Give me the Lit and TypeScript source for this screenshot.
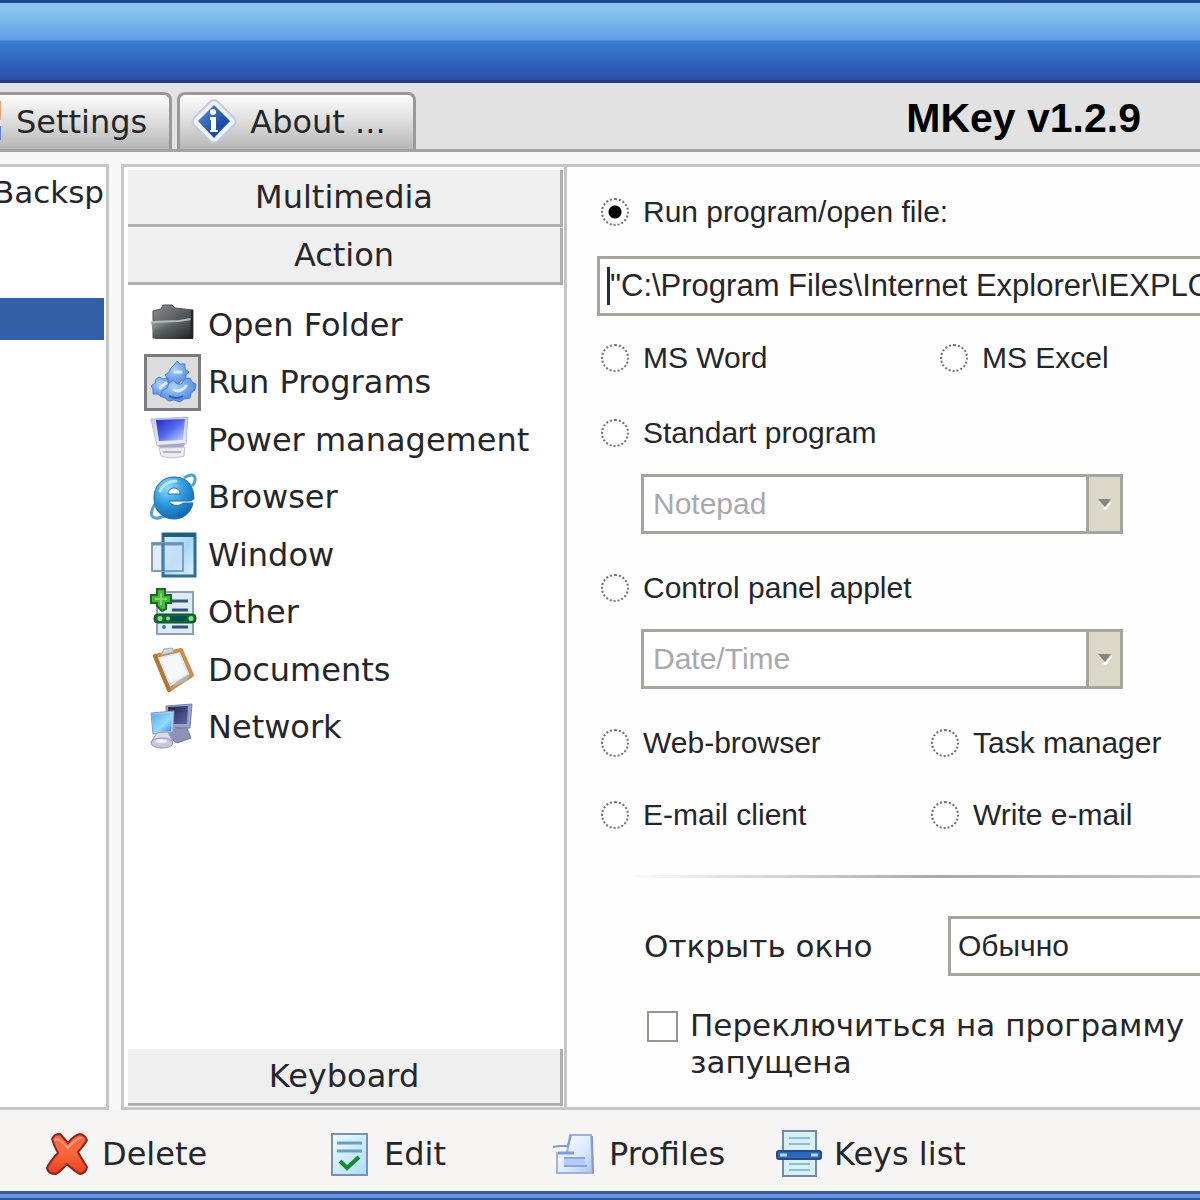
import { LitElement, html, svg, css, type TemplateResult } from "lit";
import { customElement, state } from "lit/decorators.js";
import { classMap } from "lit/directives/class-map.js";

const icon = (body: TemplateResult) =>
  html`<svg class="icon" viewBox="0 0 48 48" aria-hidden="true">${body}</svg>`;

const folderIcon = icon(svg`
  <defs>
    <linearGradient id="fo1" x1="0" y1="0" x2="1" y2="1"><stop offset="0" stop-color="#8b9292"/><stop offset="1" stop-color="#222627"/></linearGradient>
    <linearGradient id="fo2" x1="0" y1="0" x2="1" y2="1"><stop offset="0" stop-color="#aab2b2"/><stop offset=".4" stop-color="#5d6465"/><stop offset="1" stop-color="#1f2223"/></linearGradient>
  </defs>
  <path d="M4 10 L12 8 L14 4 H23 L26 7 L44 9 V37 H4 Z" fill="url(#fo1)" stroke="#4d5252"/>
  <path d="M2 21 L30 20 L42 18 V38 H6 Z" fill="url(#fo2)"/>
  <path d="M2 21 L30 20 L42 18" fill="none" stroke="#b6bcbc" stroke-width="2"/>
  <path d="M42 9 H44 V38 H41 Z" fill="#232728"/>`);

const runIcon = icon(svg`
  <defs><radialGradient id="ru1" cx=".4" cy=".35" r=".7"><stop offset="0" stop-color="#a9d2f9"/><stop offset="1" stop-color="#4a83dc"/></radialGradient></defs>
  <g fill="url(#ru1)" stroke="#4d80cf" stroke-width="1">
    <path d="M22 10 l3 -3 l3 -4 l3 3 l5 0 l0 5 l4 3 l-3 3 l0 5 l-5 1 l-3 4 l-5 -2 l-5 1 l0 -5 l-3 -4 l4 -3 z"/>
    <path d="M10 19 l4 2 l4 -1 l1 4 l4 3 l-2 4 l0 4 l-5 1 l-3 3 l-4 -3 l-5 0 l0 -5 l-2 -3 l4 -3 l1 -4 z"/>
    <path d="M24 22 l4 4 h4 l4 -5 l5 -1 l2 4 l4 2 l-1 6 l-4 3 l-1 5 l-6 1 l-4 3 l-6 -2 l-5 1 l-4 -3 l-5 -2 l2 -5 l5 -3 l2 -5 z"/>
  </g>
  <path d="M26 14 h6 M11 30 l6 -5 M25 32 q6 3 12 -4" stroke="#d9ecff" stroke-width="3" fill="none" stroke-linecap="round"/>
  <path d="M20 38 q8 4 14 0" stroke="#2c61c4" stroke-width="2" fill="none"/>`);

const powerIcon = icon(svg`
  <defs>
    <linearGradient id="po1" x1="0" y1="0" x2="1" y2="1"><stop offset="0" stop-color="#2226c8"/><stop offset=".5" stop-color="#5368ee"/><stop offset="1" stop-color="#c9dcff"/></linearGradient>
    <linearGradient id="po2" x1="0" y1="0" x2="0" y2="1"><stop offset="0" stop-color="#c7c6e8"/><stop offset="1" stop-color="#f1f0f6"/></linearGradient>
  </defs>
  <path d="M2 3 L39 1 L37 28 L8 30 Z" fill="url(#po2)" stroke="#b9b9dd"/>
  <path d="M7 4 L36 3 L34 24 L10 25 Z" fill="url(#po1)"/>
  <path d="M9 29 L36 27 L34 33 H12 Z" fill="#a7a7c4"/>
  <path d="M10 32 L36 31 L35 40 Q23 44 12 40 Z" fill="#ebeaf1" stroke="#c3c1d4"/>
  <path d="M14 36 H32" stroke="#b4b2c8" stroke-width="2"/>`);

const browserIcon = icon(svg`
  <defs><radialGradient id="br1" cx=".35" cy=".25" r=".85"><stop offset="0" stop-color="#8fdcfb"/><stop offset=".5" stop-color="#2b98dc"/><stop offset="1" stop-color="#0c5ba6"/></radialGradient></defs>
  <path d="M35 5 Q45 -1 46 5 Q47 9 43 13 M6 31 Q0 41 4 44 Q9 47 17 42" fill="none" stroke="#5a9fc9" stroke-width="3"/>
  <path fill-rule="evenodd" d="M25 4 C38 4 45 12 45 26 L41 28 H20 C22 33 30 34 34 30 H44 C42 40 34 46 25 46 C13 46 5 37 5 25 C5 13 13 4 25 4 Z M19 21 H31 C31 13 19 13 19 21 Z" fill="url(#br1)" stroke="#1a6fb4"/>
  <path d="M11 18 Q16 8 27 8" fill="none" stroke="#b4e6fc" stroke-width="3" stroke-linecap="round"/>`);

const windowIcon = icon(svg`
  <defs><linearGradient id="wi1" x1="0" y1="0" x2="1" y2="1"><stop offset="0" stop-color="#d4effc"/><stop offset=".5" stop-color="#a5d8f8"/><stop offset="1" stop-color="#dff4fe"/></linearGradient></defs>
  <rect x="14" y="3" width="32" height="42" fill="url(#wi1)" stroke="#2f6e92" stroke-width="3"/>
  <path d="M14 4 H46" stroke="#245b7c" stroke-width="4"/>
  <rect x="3" y="12" width="31" height="28" fill="#cfe2f7" fill-opacity=".65" stroke="#7f9fc0" stroke-width="2"/>
  <path d="M3 13 H34" stroke="#6b95b8" stroke-width="3"/>
  <path d="M14 12 V40" stroke="#3f7fae" stroke-width="3"/>`);

const otherIcon = icon(svg`
  <rect x="8" y="4" width="36" height="42" fill="#dfeaf5" stroke="#8d9db6" stroke-width="2"/>
  <path d="M23 13 H39 M23 22 H39 M23 39 H39" stroke="#31567a" stroke-width="3"/>
  <circle cx="15" cy="39" r="2" fill="#2f8c8c"/>
  <path d="M10 21 h6" stroke="#a6b8ca" stroke-width="2"/>
  <rect x="5" y="26" width="42" height="9" rx="4" fill="#14653a" stroke="#0f5226"/>
  <rect x="20" y="28" width="18" height="5" fill="#07504c"/>
  <circle cx="11" cy="30.500" r="2.500" fill="#8ee07c"/><circle cx="19" cy="30.500" r="2" fill="#8ee07c"/><circle cx="42" cy="30.500" r="2.500" fill="#8ee07c"/>
  <path d="M8 1 H16 V7 H22 V15 H17 V21 L13 23 L8 18 V15 H2 V7 H8 Z" fill="#45b83b" stroke="#1a6a1f" stroke-width="2"/>
  <path d="M12 5 V17 M6 11 H18" stroke="#7fd86e" stroke-width="2"/>`);

const documentsIcon = icon(svg`
  <defs><linearGradient id="do1" x1="0" y1="0" x2="1" y2="1"><stop offset="0" stop-color="#ffffff"/><stop offset="1" stop-color="#d8dfea"/></linearGradient></defs>
  <path d="M6 10 L32 4 L43 29 L20 44 Z" fill="url(#do1)" stroke="#c98d4c" stroke-width="4" stroke-linejoin="round"/>
  <path d="M6 10 L20 44" stroke="#b3763a" stroke-width="4" stroke-linecap="round"/>
  <path d="M11 12 L30 7 L39 28 L21 38 Z" fill="#f4f7fb" stroke="#dde3ec"/>
  <path d="M12 9 L15 3 L23 2 L25 6 Z" fill="#cfd4dc" stroke="#a2a8b2"/>
  <path d="M27 36 L41 28 L37 35 L24 41 Z" fill="#b9b3ac"/>`);

const networkIcon = icon(svg`
  <defs>
    <linearGradient id="ne1" x1="0" y1="0" x2="1" y2="1"><stop offset="0" stop-color="#59a9ec"/><stop offset=".6" stop-color="#8fdcfb"/><stop offset="1" stop-color="#3b85d4"/></linearGradient>
    <linearGradient id="ne2" x1="0" y1="0" x2="1" y2="1"><stop offset="0" stop-color="#20244e"/><stop offset="1" stop-color="#5a66a8"/></linearGradient>
  </defs>
  <path d="M17 3 L43 1 L41 25 L18 24 Z" fill="#9fa2c4" stroke="#7c80a8"/>
  <path d="M19 4 L39 3 L38 21 L20 21 Z" fill="url(#ne2)"/>
  <path d="M22 26 L38 25 L42 35 L28 40 L20 34 Z" fill="#8f92b6" stroke="#777ba6"/>
  <path d="M2 10 L25 8 L24 29 L4 31 Z" fill="#b9cdea" stroke="#7c9bcb"/>
  <path d="M3 11 L23 10 L22 28 L4 29 Z" fill="url(#ne1)"/>
  <path d="M8 30 L19 29 L24 39 L12 45 L2 39 Z" fill="#d9dbe8" stroke="#9a9eb8"/>
  <ellipse cx="13" cy="40" rx="11" ry="5" fill="#c5c8da" stroke="#8f93b1"/>
  <ellipse cx="12" cy="38" rx="6" ry="2" fill="#f1f2f8"/>`);

const infoIcon = icon(svg`
  <defs><linearGradient id="in1" x1="0" y1="0" x2="1" y2="1"><stop offset="0" stop-color="#5d93dc"/><stop offset=".6" stop-color="#1f53a8"/><stop offset="1" stop-color="#173f86"/></linearGradient></defs>
  <path d="M24 2 Q26 2 28 4 L44 20 Q47 24 44 27 L28 43 Q24 46 20 43 L4 27 Q1 24 4 20 L20 4 Q22 2 24 2 Z" fill="#eef2fb" stroke="#c0cbe3" stroke-width="2"/>
  <path d="M24 7 L40 23 L24 40 L8 23 Z" fill="url(#in1)"/>
  <circle cx="23" cy="14" r="3" fill="#fff"/>
  <path d="M20 19 H26 V32 H28 V34 H20 V32 H21 V22 H20 Z" fill="#fff"/>`);

const settingsIcon = icon(svg`
  <rect x="2" y="3" width="45" height="19" fill="#f3a06a"/><rect x="2" y="22" width="45" height="6" fill="#f4e3dc"/><rect x="2" y="28" width="45" height="14" fill="#5f83cf"/>`);

const deleteIcon = icon(svg`
  <defs><linearGradient id="de1" x1="0" y1="0" x2="0" y2="1"><stop offset="0" stop-color="#f4684a"/><stop offset=".5" stop-color="#f8663a"/><stop offset="1" stop-color="#e8401f"/></linearGradient></defs>
  <path d="M9 9 Q11 4 17 4 Q21 8 25 13 Q30 6 37 4 Q42 5 44 10 Q42 14 35 22 Q38 28 44 37 Q43 43 37 44 Q31 41 24 34 Q18 41 13 44 Q5 44 4 38 Q7 31 15 23 Q11 16 9 9 Z" fill="url(#de1)" stroke="#8e2318" stroke-width="2" stroke-linejoin="round"/>
  <path d="M12 10 Q15 7 25 18 Q32 9 38 8" fill="none" stroke="#fb9a80" stroke-width="2" stroke-linecap="round"/>`);

const editIcon = icon(svg`
  <defs><linearGradient id="ed1" x1="0" y1="0" x2="1" y2="1"><stop offset="0" stop-color="#eefaff"/><stop offset="1" stop-color="#a9dff6"/></linearGradient></defs>
  <rect x="7" y="4" width="35" height="41" fill="url(#ed1)" stroke="#7c8fad" stroke-width="2"/>
  <path d="M12 13 H37 M12 21 H37" stroke="#6ba0bd" stroke-width="3"/>
  <path d="M15 31 L22 38 L34 27" fill="none" stroke="#168a2c" stroke-width="4"/>`);

const profilesIcon = icon(svg`
  <defs><linearGradient id="pr1" x1="0" y1="0" x2="1" y2="1"><stop offset="0" stop-color="#ffffff"/><stop offset=".6" stop-color="#dbe8fb"/><stop offset="1" stop-color="#a9c3ee"/></linearGradient></defs>
  <path d="M20 5 H41 L43 43 H7 V23 H17 Z" fill="url(#pr1)" stroke="#a3b3d6" stroke-width="2"/>
  <path d="M3 17 Q8 16 11 16 H18 L21 5" fill="none" stroke="#7f9bdd" stroke-width="2"/>
  <path d="M8 23 H24" stroke="#7f9bdd" stroke-width="3"/>
  <path d="M14 28 H35 V36 H14 Z" fill="#b6cbf6"/>
  <path d="M14 28 H35 M14 36 H37" stroke="#88a4e6" stroke-width="2"/>
  <path d="M42 6 L43 43" stroke="#8a99c0" stroke-width="2"/>`);

const keysIcon = icon(svg`
  <rect x="8" y="1" width="33" height="45" fill="#d8effc" stroke="#7389a6" stroke-width="2"/>
  <path d="M14 8 H35 M14 14 H35 M14 34 H35 M14 40 H35" stroke="#8fbcd6" stroke-width="2"/>
  <rect x="2" y="21" width="44" height="8" rx="2" fill="#2f66b5" stroke="#284a88" stroke-width="2"/>
  <path d="M5 25 H12 M36 25 H43" stroke="#b4d6fb" stroke-width="3"/>`);

const arrowIcon = html`<svg class="arrow" viewBox="0 0 16 12" aria-hidden="true">
  <path d="M5 11 L15 3 L15 4 L9 12 Z" fill="#fff" /><path d="M1 1 H14 L8 9 Z" fill="#85857a" />
</svg>`;

const ACTIONS: [string, TemplateResult][] = [
  ["Open Folder", folderIcon],
  ["Run Programs", runIcon],
  ["Power management", powerIcon],
  ["Browser", browserIcon],
  ["Window", windowIcon],
  ["Other", otherIcon],
  ["Documents", documentsIcon],
  ["Network", networkIcon],
];

const COMMANDS: [string, TemplateResult][] = [
  ["Delete", deleteIcon],
  ["Edit", editIcon],
  ["Profiles", profilesIcon],
  ["Keys list", keysIcon],
];

@customElement("app-root")
export class AppRoot extends LitElement {
  static styles = css`
    :host {
      display: flex;
      flex-direction: column;
      min-height: 100vh;
      overflow: hidden;
      background: #f7f7f7;
      color: #26262a;
      font: 32px/40px "DejaVu Sans", Verdana, sans-serif;
    }
    * { box-sizing: border-box; }
    button, input, select { font: inherit; color: inherit; margin: 0; padding: 0; border: 0; background: none; border-radius: 0; }
    button { display: flex; align-items: center; white-space: nowrap; }
    .icon { width: 48px; height: 48px; flex: none; display: block; }

    .titlebar {
      height: 83px;
      flex: none;
      border-top: 3px solid #1d468c;
      border-bottom: 3px solid #233f7d;
      background: linear-gradient(#92c4f4 0, #7bbbe8 16px, #6ea8ec 27px, #609ee4 37px, #3a7fd2 38px, #336fc4 52px, #2e5db8 64px, #2b50a8 100%);
    }
    .tabbar {
      display: flex;
      align-items: flex-end;
      gap: 5px;
      height: 69px;
      flex: none;
      border-top: 3px solid #dfe4f4;
      border-bottom: 3px solid #a3a3a3;
      background: #e2e2e2;
    }
    .tab {
      height: 57px;
      overflow: hidden;
      border: 3px solid #999;
      border-bottom: 0;
      border-radius: 8px 8px 0 0;
      background: linear-gradient(#fcfcfc, #e0e0e0 45%, #b6b6b6);
      padding: 0 27px 0 10px;
      gap: 12px;
    }
    .tab.first { margin-left: -49px; padding-left: 0; padding-right: 22px; gap: 14px; }
    .product {
      margin: 0 0 0 auto;
      align-self: center;
      padding-right: 59px;
      color: #000;
      font: bold 41px/46px "Liberation Sans", Arial, sans-serif;
    }

    .body {
      flex: 1;
      display: grid;
      grid-template-columns: 109px 455px 1fr;
      padding-top: 12px;
    }
    .keys {
      margin: 0;
      padding: 5px 2px 0 0;
      list-style: none;
      border: 3px solid #c6c6c6;
      border-left: 0;
      background: #fff;
      overflow: hidden;
    }
    .key { display: flex; justify-content: flex-end; height: 42px; white-space: nowrap; overflow: hidden; font-size: 31px; }
    .key.selected { background: #335fa9; }
    .middle {
      margin-left: 12px;
      display: flex;
      flex-direction: column;
      padding: 3px 1px 0 4px;
      border: 3px solid #c6c6c6;
      border-right: 0;
      background: #fff;
    }
    .section {
      justify-content: center;
      flex: none;
      width: 100%;
      height: 57px;
      margin-bottom: 1px;
      border-right: 3px solid #aeaeae;
      border-bottom: 3px solid #aeaeae;
      background: #efefef;
    }
    .actions {
      flex: none;
      display: grid;
      grid-template-rows: repeat(8, 1fr);
      height: 460px;
      margin: 10px 0 auto;
      padding: 0 0 0 16px;
      list-style: none;
    }
    .action { height: 100%; gap: 7px; }
    .holder { width: 57px; height: 57px; display: grid; place-items: center; border: 3px solid transparent; }
    .on .holder { border-color: #7b7b7d; background: #dcdcde; }

    .form {
      min-width: 0;
      overflow: hidden;
      padding: 25px 0 24px 30px;
      border: 3px solid #c6c6c6;
      border-right: 0;
      background: #fefefe;
      font: 30px/40px "Liberation Sans", Arial, sans-serif;
      white-space: nowrap;
    }
    .pair { display: grid; grid-template-columns: 330px 1fr; }
    .pair.office { grid-template-columns: 339px 1fr; margin: 22px 0 35px; }
    .pair.mail { margin-top: 32px; }
    .radio { display: flex; align-items: center; gap: 14px; height: 40px; padding-left: 4px; }
    .radio input {
      appearance: none;
      width: 28px;
      height: 28px;
      flex: none;
      border: 2px dotted #74746e;
      border-radius: 50%;
      background: #fff;
    }
    .radio input:checked { background: radial-gradient(circle, #000 6px, #fff 7px); }
    .box { display: flex; align-items: stretch; height: 60px; border: 3px solid #a5a59b; background: #fff; }
    .box select { flex: 1; min-width: 0; appearance: none; padding-left: 9px; opacity: 1; }
    .box select:disabled { color: #a9a9ad; }
    .box.path { margin: 24px -8px 0 0; align-items: center; padding-left: 7px; font-size: 31px; }
    .box.path input { flex: 1; min-width: 0; outline: none; }
    .caret { width: 3px; height: 38px; background: #23303c; }
    .box.pick { width: 482px; margin: 21px 0 34px 44px; }
    .drop { width: 34px; display: grid; place-items: center; border-left: 3px solid #a5a59b; background: #dbd8c8; }
    .arrow { width: 16px; height: 12px; }
    .rule { height: 3px; margin: 40px 0 38px 22px; border: 0; background: linear-gradient(90deg, #fff, #a9a9a3 55%, #c4c4c0); }
    .open { display: grid; grid-template-columns: 304px 1fr; align-items: center; padding-left: 47px; font: 31px/37px "DejaVu Sans", Verdana, sans-serif; }
    .box.mode { margin-right: -8px; font: 30px/40px "Liberation Sans", Arial, sans-serif; }
    .box.mode select { padding-left: 7px; }
    .switch { display: flex; gap: 12px; margin-top: 31px; padding-left: 50px; font: 31px/37px "DejaVu Sans", Verdana, sans-serif; }
    .switch input { appearance: none; flex: none; width: 31px; height: 31px; margin-top: 4px; border: 2px solid #96968a; background: #fff; }

    .commands {
      flex: none;
      display: grid;
      grid-template-columns: 282px 225px 225px auto;
      justify-content: start;
      align-items: center;
      height: 81px;
      padding: 6px 0 0 43px;
      background: #f6f5f4;
    }
    .command { gap: 11px; }
    .frame { flex: none; height: 9px; border-top: 3px solid #3a5c9d; border-bottom: 2px solid #2c57a8; background: #6a93dc; }
  `;

  @state() private current = "Run Programs";
  @state() private target = "Run program/open file:";

  private radio(label: string) {
    return html`<label class="radio">
      <input type="radio" name="target" .checked=${this.target === label} @change=${() => (this.target = label)} />
      <span>${label}</span>
    </label>`;
  }

  private pick(label: string, option: string) {
    return html`<div class="box pick">
      <select aria-label=${label} disabled><option>${option}</option></select>
      <span class="drop">${arrowIcon}</span>
    </div>`;
  }

  render() {
    return html`
      <header class="titlebar"></header>
      <nav class="tabbar">
        <button class="tab first">${settingsIcon}Settings</button>
        <button class="tab">${infoIcon}About ...</button>
        <h1 class="product">MKey v1.2.9</h1>
      </nav>
      <main class="body">
        <ul class="keys">
          <li class="key">Backsp</li>
          <li class="key"></li>
          <li class="key"></li>
          <li class="key selected"></li>
        </ul>
        <section class="middle">
          <button class="section">Multimedia</button>
          <button class="section">Action</button>
          <ul class="actions">
            ${ACTIONS.map(
              ([name, glyph]) => html`<li>
                <button class=${classMap({ action: true, on: this.current === name })} @click=${() => (this.current = name)}>
                  <span class="holder">${glyph}</span>${name}
                </button>
              </li>`,
            )}
          </ul>
          <button class="section">Keyboard</button>
        </section>
        <form class="form">
          ${this.radio("Run program/open file:")}
          <div class="box path">
            <span class="caret"></span>
            <input type="text" aria-label="Program path" .value=${'"C:\\Program Files\\Internet Explorer\\IEXPLORE.EXE"'} />
          </div>
          <div class="pair office">${this.radio("MS Word")}${this.radio("MS Excel")}</div>
          ${this.radio("Standart program")} ${this.pick("Standart program", "Notepad")}
          ${this.radio("Control panel applet")} ${this.pick("Control panel applet", "Date/Time")}
          <div class="pair">${this.radio("Web-browser")}${this.radio("Task manager")}</div>
          <div class="pair mail">${this.radio("E-mail client")}${this.radio("Write e-mail")}</div>
          <hr class="rule" />
          <div class="open">
            <label for="mode">Открыть окно</label>
            <div class="box mode"><select id="mode"><option>Обычно</option></select></div>
          </div>
          <label class="switch">
            <input type="checkbox" />
            <span>Переключиться на программу<br />запущена</span>
          </label>
        </form>
      </main>
      <footer class="commands">
        ${COMMANDS.map(([name, glyph]) => html`<button class="command">${glyph}${name}</button>`)}
      </footer>
      <div class="frame"></div>
    `;
  }
}
